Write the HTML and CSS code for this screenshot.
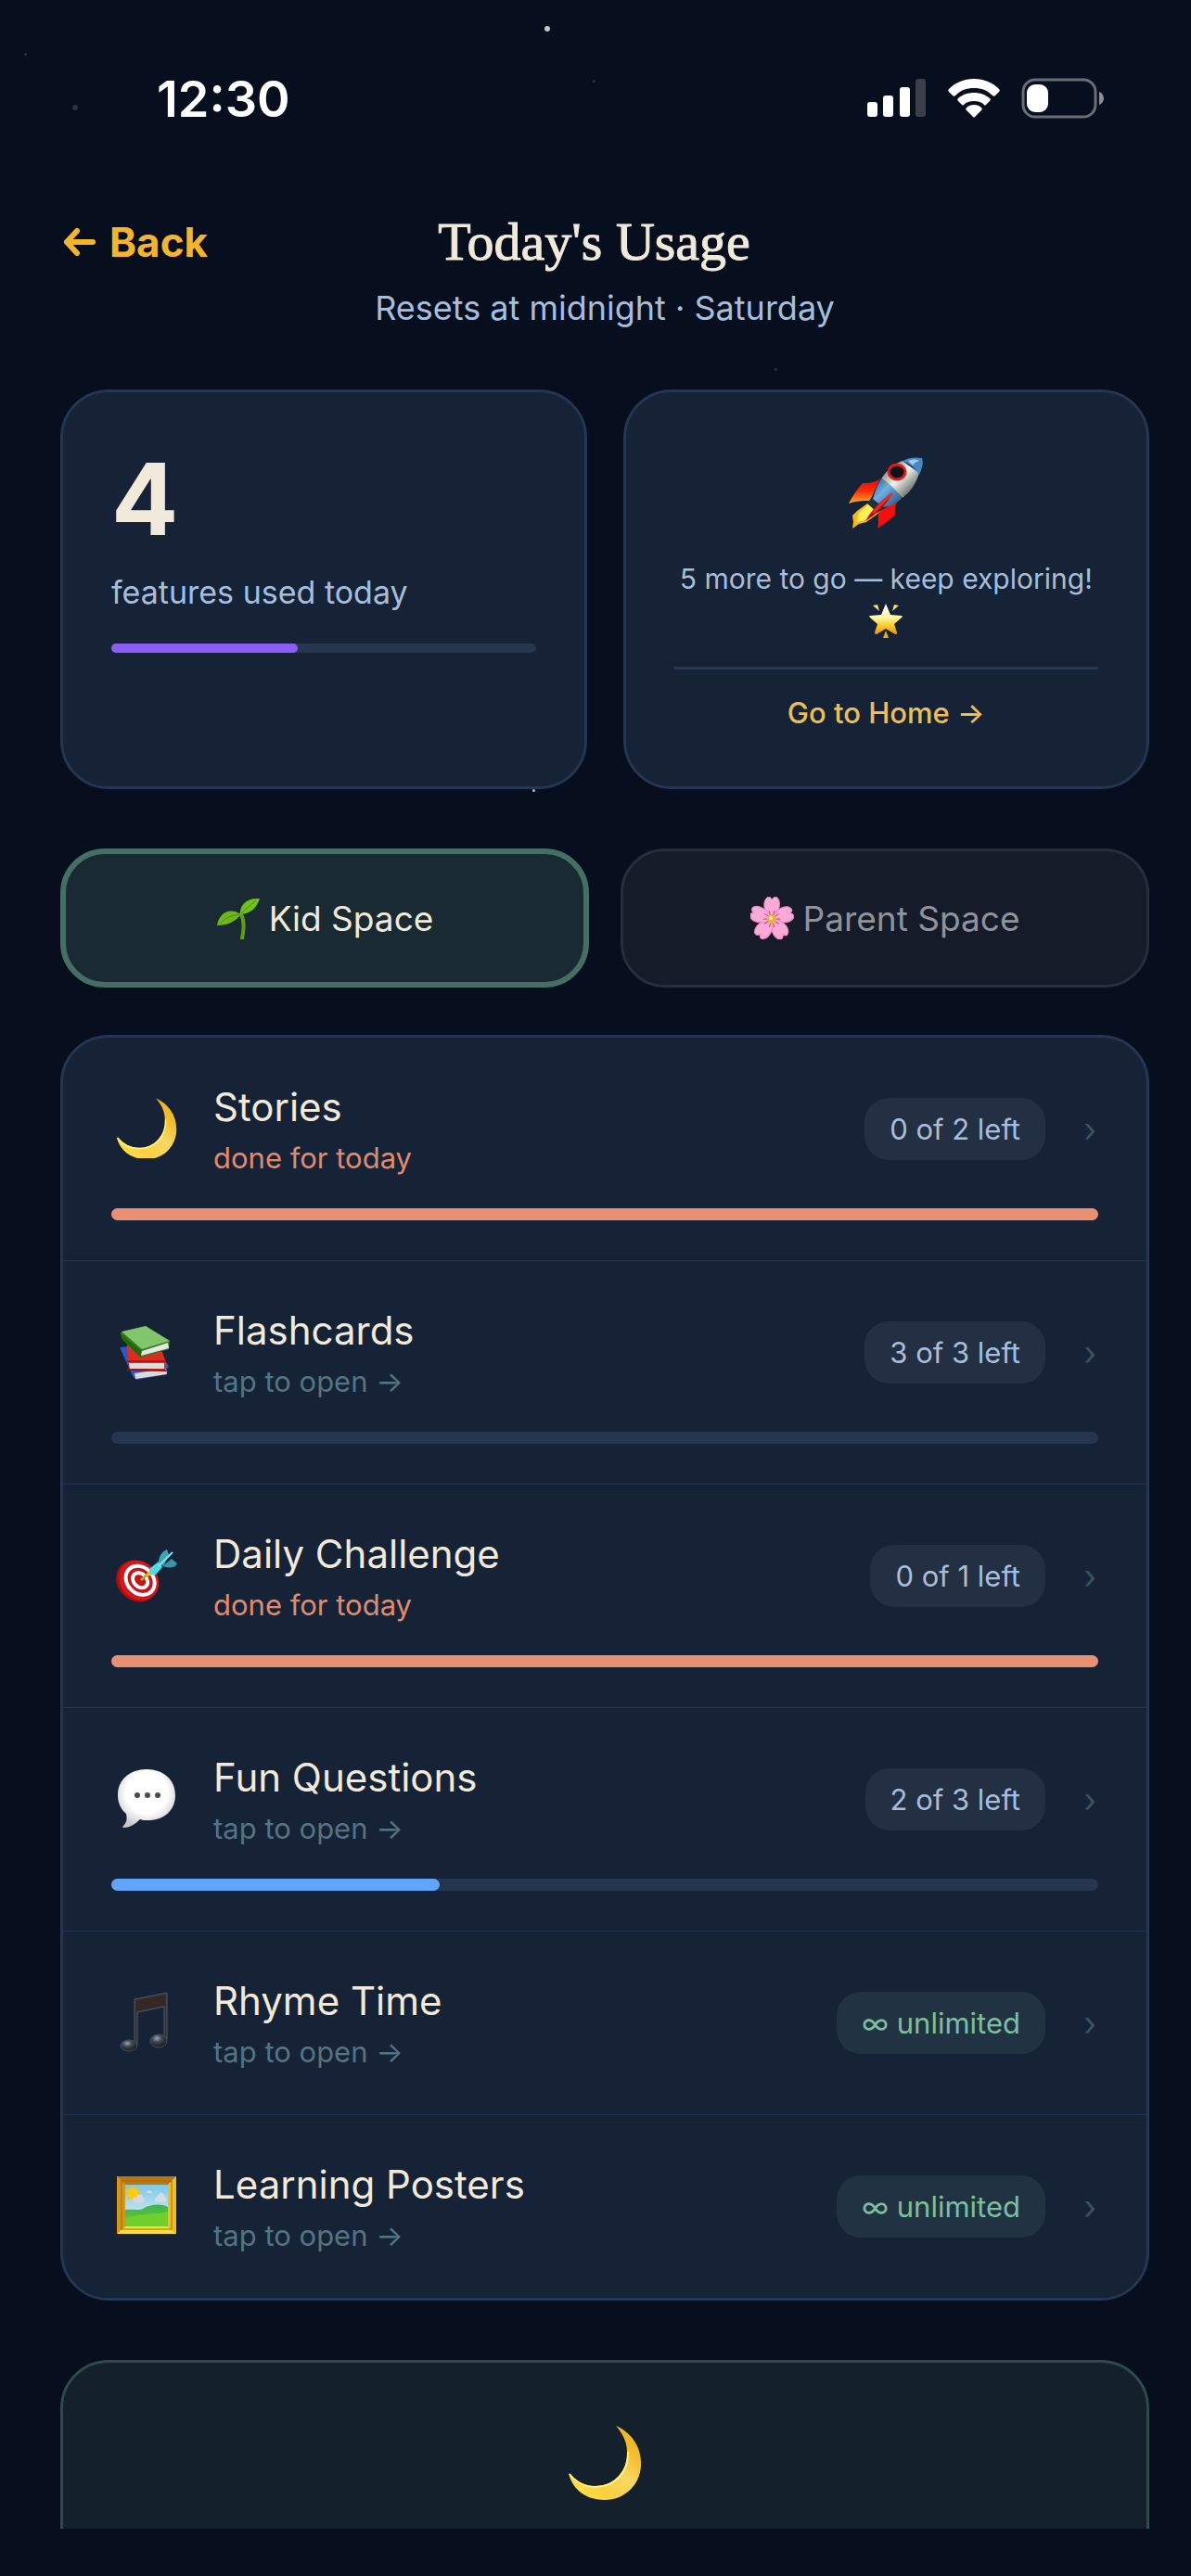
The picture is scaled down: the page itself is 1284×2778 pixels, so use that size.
FILE: index.html
```html
<!DOCTYPE html>
<html lang="en">
<head>
  <meta charset="UTF-8">
  <meta name="viewport" content="width=device-width, initial-scale=1.0">
  <title>Today's Usage</title>
  <link rel="stylesheet" href="styles.css">
</head>
<body>
  <!-- Shared icon art -->
  <svg class="defs" aria-hidden="true">
    <defs>
      <linearGradient id="moonFill" x1="0" y1="1" x2="1" y2="0">
        <stop offset="0" stop-color="#ffe94f"/>
        <stop offset="0.3" stop-color="#fbd03c"/>
        <stop offset="0.55" stop-color="#f7d866"/>
        <stop offset="0.75" stop-color="#f3bf2e"/>
        <stop offset="1" stop-color="#e9a91c"/>
      </linearGradient>
      <symbol id="moon" viewBox="0 0 80 80">
        <path d="M52 0C70 8 80 24 79 43C78 64 61 80 40 80C20 80 5 69 1 51C10 61 20 65 30 65C51 65 65 48 64 28C64 17 59 8 52 0Z" fill="url(#moonFill)"/>
        <path d="M2 52C10 62 20 66 30 66C52 66 66 48 65 28" fill="none" stroke="#fff27a" stroke-width="2"/>
      </symbol>
    </defs>
  </svg>

  <div class="screen">
    <!-- Background stars -->
    <div class="sky" aria-hidden="true">
      <i class="star star-a"></i>
      <i class="star star-b"></i>
      <i class="star star-c"></i>
      <i class="star star-d"></i>
      <i class="star star-e"></i>
      <i class="star star-f"></i>
    </div>

    <div class="status-bar">
      <span class="time">12:30</span>
      <div class="status-icons">
        <svg width="64" height="42" viewBox="0 0 64 42" fill="#fff" aria-label="Signal">
          <rect x="0" y="25" width="11" height="16" rx="3"/>
          <rect x="17" y="18" width="11" height="23" rx="3"/>
          <rect x="35" y="9" width="11" height="32" rx="3"/>
          <rect x="52" y="0" width="11" height="41" rx="3" fill="#3a3f4b"/>
        </svg>
        <svg width="56" height="42" viewBox="0 0 56 42" fill="#fff" aria-label="Wi-Fi">
          <path d="M28 0C39 0 48 4 55 11C56 12 56 13 55 14L51 18C50 19 49 19 48 18C42 12 36 10 28 10C20 10 14 12 8 18C7 19 6 19 5 18L1 14C0 13 0 12 1 11C8 4 17 0 28 0Z"/>
          <path d="M28 15C35 15 40 17 45 21C46 22 46 23 45 24L41 28C40 29 40 29 39 28C36 25 33 24 28 24C23 24 20 25 17 28C16 29 16 29 15 28L11 24C10 23 10 22 11 21C16 17 21 15 28 15Z"/>
          <path d="M28 28C31 28 34 29 36 31C37 32 37 33 36 34L29 41C28 42 28 42 27 41L20 34C19 33 19 32 20 31C22 29 25 28 28 28Z"/>
        </svg>
        <svg width="89" height="44" viewBox="0 0 89 44" aria-label="Battery">
          <rect x="2" y="2" width="78" height="40" rx="13" fill="none" stroke="#696d77" stroke-width="3"/>
          <rect x="6" y="7" width="23" height="30" rx="9" fill="#fff"/>
          <path d="M84 15C87 16 89 19 89 22C89 25 87 28 84 29Z" fill="#8b8e96"/>
        </svg>
      </div>
    </div>

    <header>
      <div class="title-row">
        <a class="back" href="#">
          <svg width="36" height="32" viewBox="0 0 36 32" fill="none" stroke="#f4b52a" stroke-width="6" stroke-linecap="round" stroke-linejoin="round" aria-hidden="true">
            <path d="M15 4L4 16L15 28M4 16H32"/>
          </svg>
          Back
        </a>
        <h1>Today's Usage</h1>
        <span class="title-spacer"></span>
      </div>
      <p class="subtitle">Resets at midnight · Saturday</p>
    </header>

    <main>
      <section class="summary">
        <div class="card">
          <div class="count">4</div>
          <p class="count-label">features used today</p>
          <div class="track"><div class="fill fill-purple" style="width: 44%"></div></div>
        </div>
        <div class="card card-center">
          <svg class="rocket" viewBox="0 0 80 80" aria-hidden="true">
            <defs>
              <linearGradient id="hull" x1="0.2" y1="0.2" x2="0.8" y2="0.8">
                <stop offset="0" stop-color="#8f9799"/>
                <stop offset="0.45" stop-color="#f2f4ee"/>
                <stop offset="1" stop-color="#6f7672"/>
              </linearGradient>
              <linearGradient id="blueHull" x1="0" y1="0" x2="1" y2="1">
                <stop offset="0" stop-color="#24558a"/>
                <stop offset="0.4" stop-color="#6db0e6"/>
                <stop offset="1" stop-color="#1d4069"/>
              </linearGradient>
              <linearGradient id="fin" x1="0" y1="0" x2="0" y2="1">
                <stop offset="0" stop-color="#d80e05"/>
                <stop offset="0.5" stop-color="#fb2c06"/>
                <stop offset="1" stop-color="#ffb428"/>
              </linearGradient>
            </defs>
            <path d="M34 23C27 28 21 28 15 28C9 34 5 41 0 50C8 47 15 47 23 47Z" fill="url(#fin)"/>
            <path d="M53 47C49 53 50 58 50 62C44 68 38 72 31 77C33 70 31 65 32 59Z" fill="#f3120b"/>
            <path d="M20 50L35 57C30 63 24 66 19 70L11 72L4 77L5 70L4 63L9 58Z" fill="#f7b91e"/>
            <path d="M21 51L33 58L17 68L9 70L11 60Z" fill="#ffef55"/>
            <path d="M25 43L37 56L31 60L20 50Z" fill="#20303e"/>
            <path d="M36 22C31 29 29 36 26 45L37 54C46 53 54 49 59 42Z" fill="url(#blueHull)"/>
            <path d="M36 22C42 13 49 7 58 4L76 17C73 27 68 36 59 43Z" fill="url(#hull)"/>
            <path d="M36 22L59 43" stroke="#d8c66a" stroke-width="1"/>
            <path d="M58 4C65 0 72 0 79 1C81 7 79 12 76 19C72 12 66 7 58 4Z" fill="#4687c6"/>
            <path d="M64 4C69 2 73 2 76 4C72 5 70 7 69 9Z" fill="#9dcbf2"/>
            <ellipse cx="52" cy="16" rx="9" ry="8" fill="#101216" stroke="#e51a1d" stroke-width="3"/>
            <path d="M47 39C39 44 28 51 18 69C31 60 40 53 47 39Z" fill="#a90e0e"/>
            <path d="M47 39C39 46 31 55 26 60" fill="none" stroke="#ef2a26" stroke-width="3"/>
          </svg>
          <p class="nudge">5 more to go — keep exploring!
            <svg class="glow-star" viewBox="0 0 36 38" aria-hidden="true">
              <defs>
                <linearGradient id="starFill" x1="0" y1="0" x2="0" y2="1">
                  <stop offset="0" stop-color="#fff"/>
                  <stop offset="0.45" stop-color="#fff6a8"/>
                  <stop offset="0.7" stop-color="#fbd02c"/>
                  <stop offset="1" stop-color="#e8920f"/>
                </linearGradient>
              </defs>
              <path d="M18 0L23 12L35 13C36 13 36 14 35 15L27 22L30 31C30 33 29 33 28 33L18 27L8 33C7 33 6 33 6 31L9 22L1 15C0 14 0 13 1 13L13 12Z" fill="url(#starFill)"/>
              <path d="M4 2L9 1L11 8Z" fill="#f7e27a"/>
              <path d="M32 2L27 1L25 8Z" fill="#f7e27a"/>
              <path d="M18 29L21 37H15Z" fill="#eeae1c"/>
            </svg>
          </p>
          <a class="home-link" href="#">Go to Home →</a>
        </div>
      </section>

      <div class="tabs">
        <button class="tab tab-active" type="button">
          <svg width="47" height="46" viewBox="0 0 47 46" aria-hidden="true">
            <path d="M27 19C31 27 30 36 28 45" fill="none" stroke="#5f9d13" stroke-width="4" stroke-linecap="round"/>
            <path d="M26 19C25 9 33 1 47 2C44 11 39 18 26 19Z" fill="#74c01c"/>
            <path d="M27 19C15 11 3 17 1 31C11 31 20 28 27 19Z" fill="#6cb71a"/>
            <path d="M27 18C33 13 38 8 43 4M25 19C17 20 10 23 4 29" fill="none" stroke="#4b8f0d" stroke-width="1"/>
          </svg>
          Kid Space
        </button>
        <button class="tab" type="button">
          <svg width="47" height="46" viewBox="0 0 47 46" aria-hidden="true">
            <g fill="#fba9d6" stroke="#e987be" stroke-width="1">
              <path id="petal" d="M23 25C15 18 12 6 18 1C21 -1 22 1 23 3C25 1 26 -1 29 1C34 6 31 18 23 25Z"/>
              <use href="#petal" transform="rotate(72 23 24)"/>
              <use href="#petal" transform="rotate(144 23 24)"/>
              <use href="#petal" transform="rotate(216 23 24)"/>
              <use href="#petal" transform="rotate(288 23 24)"/>
            </g>
            <g stroke="#c24a86" stroke-width="1">
              <path id="stamen" d="M20 15L22 22M26 15L24 22"/>
              <use href="#stamen" transform="rotate(72 23 24)"/>
              <use href="#stamen" transform="rotate(144 23 24)"/>
              <use href="#stamen" transform="rotate(216 23 24)"/>
              <use href="#stamen" transform="rotate(288 23 24)"/>
            </g>
            <circle cx="23" cy="24" r="5" fill="#e9b23e"/>
            <circle cx="22" cy="23" r="2" fill="#fff08e"/>
          </svg>
          Parent Space
        </button>
      </div>

      <ul class="feature-list">
        <li>
          <a class="feature" href="#">
            <svg class="feature-icon" viewBox="0 0 80 77" aria-hidden="true"><use href="#moon" width="80" height="80"/></svg>
            <span class="feature-text">
              <span class="feature-name">Stories</span>
              <span class="feature-note note-done">done for today</span>
            </span>
            <span class="pill">0 of 2 left</span>
            <span class="chevron">›</span>
          </a>
          <div class="track track-tall"><div class="fill fill-orange" style="width: 100%"></div></div>
        </li>
        <li>
          <a class="feature" href="#">
            <svg class="feature-icon" viewBox="0 0 66 66" aria-hidden="true">
              <path d="M4 29L14 28L55 46L57 50L54 53L55 58L22 64L18 60Z" fill="#3457bd"/>
              <path d="M20 57L54 52L55 58L21 63Z" fill="#dadada"/>
              <path d="M12 26L50 34L54 45L53 54L14 53Z" fill="#e02b20"/>
              <path d="M14 46H52V52H15Z" fill="#dcdcdc"/>
              <path d="M12 53L54 54" stroke="#8e1210" stroke-width="2"/>
              <path d="M12 44H54" stroke="#b0170f" stroke-width="2"/>
              <path d="M5 13L32 6L58 22L57 31L27 40L6 19Z" fill="#2f7f18"/>
              <path d="M6 12L32 6L58 22L28 31Z" fill="#82c56a"/>
              <path d="M28 33L56 24L57 30L27 38Z" fill="#e6e6e6"/>
              <path d="M5 14L27 33L27 40L7 21Z" fill="#22670f"/>
            </svg>
            <span class="feature-text">
              <span class="feature-name">Flashcards</span>
              <span class="feature-note">tap to open →</span>
            </span>
            <span class="pill">3 of 3 left</span>
            <span class="chevron">›</span>
          </a>
          <div class="track track-tall"><div class="fill fill-blue" style="width: 0%"></div></div>
        </li>
        <li>
          <a class="feature" href="#">
            <svg class="feature-icon" viewBox="0 0 66 66" aria-hidden="true">
              <g transform="rotate(45 24 40)">
                <ellipse cx="23" cy="41" rx="24" ry="21" fill="#a40f14"/>
                <ellipse cx="24" cy="39" rx="23" ry="20" fill="#d3171d"/>
                <ellipse cx="25" cy="38" rx="19" ry="16" fill="#fff"/>
                <ellipse cx="25" cy="38" rx="15" ry="12" fill="#c4151b"/>
                <ellipse cx="25" cy="38" rx="11" ry="9" fill="#fff"/>
                <ellipse cx="25" cy="38" rx="7" ry="5" fill="#c4151b"/>
              </g>
              <path d="M27 39L36 31" stroke="#c9a11c" stroke-width="3"/>
              <path d="M34 34L37 26L46 19L50 25L43 33Z" fill="#4ddbe8"/>
              <path d="M46 20C46 13 50 8 55 6L57 12L51 24Z" fill="#3aa7b5"/>
              <path d="M50 24L60 16L66 21C63 27 57 26 50 24Z" fill="#3597a6"/>
              <path d="M46 24L61 9" stroke="#7fe9f0" stroke-width="2"/>
              <path d="M32 35L36 29L38 34Z" fill="#e9c31d"/>
            </svg>
            <span class="feature-text">
              <span class="feature-name">Daily Challenge</span>
              <span class="feature-note note-done">done for today</span>
            </span>
            <span class="pill">0 of 1 left</span>
            <span class="chevron">›</span>
          </a>
          <div class="track track-tall"><div class="fill fill-orange" style="width: 100%"></div></div>
        </li>
        <li>
          <a class="feature" href="#">
            <svg class="feature-icon" viewBox="0 0 66 66" aria-hidden="true">
              <defs>
                <radialGradient id="bubble" cx="0.5" cy="0.4" r="0.6">
                  <stop offset="0.6" stop-color="#fff"/>
                  <stop offset="1" stop-color="#c9c9cb"/>
                </radialGradient>
              </defs>
              <path d="M33 2C51 2 64 13 64 30C64 47 51 57 35 57C31 57 28 57 26 56C20 62 14 65 8 65C7 65 7 64 8 63C12 59 12 55 11 50C5 45 2 38 2 30C2 13 15 2 33 2Z" fill="url(#bubble)"/>
              <circle cx="23" cy="30" r="3" fill="#4a4a4a"/>
              <circle cx="34" cy="30" r="3" fill="#4a4a4a"/>
              <circle cx="45" cy="30" r="3" fill="#4a4a4a"/>
            </svg>
            <span class="feature-text">
              <span class="feature-name">Fun Questions</span>
              <span class="feature-note">tap to open →</span>
            </span>
            <span class="pill">2 of 3 left</span>
            <span class="chevron">›</span>
          </a>
          <div class="track track-tall"><div class="fill fill-blue" style="width: 33.3%"></div></div>
        </li>
        <li>
          <a class="feature" href="#">
            <svg class="feature-icon" viewBox="0 0 66 66" aria-hidden="true">
              <defs>
                <radialGradient id="noteHead" cx="0.4" cy="0.3" r="0.7">
                  <stop offset="0" stop-color="#9aa6b0"/>
                  <stop offset="0.4" stop-color="#3f4a54"/>
                  <stop offset="1" stop-color="#17191d"/>
                </radialGradient>
              </defs>
              <path d="M20 9L55 2V52H52V17L23 23V58H20Z" fill="#33302f" stroke="#4f5a64" stroke-width="1"/>
              <path d="M22 11L53 5V15L22 21Z" fill="#352724"/>
              <ellipse cx="14" cy="59" rx="9" ry="6" fill="url(#noteHead)" stroke="#47525c" stroke-width="1"/>
              <ellipse cx="46" cy="54" rx="9" ry="7" fill="url(#noteHead)" stroke="#47525c" stroke-width="1"/>
            </svg>
            <span class="feature-text">
              <span class="feature-name">Rhyme Time</span>
              <span class="feature-note">tap to open →</span>
            </span>
            <span class="pill pill-green">∞ unlimited</span>
            <span class="chevron">›</span>
          </a>
        </li>
        <li>
          <a class="feature" href="#">
            <svg class="feature-icon" viewBox="0 0 66 66" aria-hidden="true">
              <defs>
                <linearGradient id="sky" x1="0" y1="0" x2="0" y2="1">
                  <stop offset="0" stop-color="#7cc9e6"/>
                  <stop offset="1" stop-color="#e3f3f4"/>
                </linearGradient>
                <linearGradient id="grass" x1="0" y1="0" x2="0" y2="1">
                  <stop offset="0" stop-color="#3fb552"/>
                  <stop offset="1" stop-color="#6ccb22"/>
                </linearGradient>
              </defs>
              <rect x="1" y="2" width="64" height="62" fill="#e0a41b"/>
              <path d="M1 2H65L56 11H10Z" fill="#b9780f"/>
              <path d="M1 64H65L56 56H10Z" fill="#fbe03a"/>
              <path d="M1 2V64L10 56V11Z" fill="#d3951a"/>
              <path d="M65 2V64L56 56V11Z" fill="#f0bc27"/>
              <rect x="6" y="7" width="54" height="52" fill="none" stroke="#a8690c" stroke-width="1"/>
              <rect x="10" y="11" width="46" height="45" fill="url(#sky)"/>
              <path d="M18 12V28M10 20H26M13 14L24 26M24 14L13 26" stroke="#f1bd12" stroke-width="2"/>
              <circle cx="18" cy="20" r="6" fill="#fccb12"/>
              <path d="M18 29C17 26 20 24 22 25C23 20 29 20 29 25C32 26 32 29 30 30C26 31 20 31 18 29Z" fill="#d4d7e2"/>
              <path d="M42 28C41 25 44 24 45 24C45 19 52 18 52 24C55 25 56 28 53 29C50 30 44 30 42 28Z" fill="#d7dbe6"/>
              <path d="M33 20C34 16 38 17 39 20Z" fill="#d7dbe6"/>
              <path d="M10 38C18 37 24 39 29 37C36 32 49 31 56 35V56H10Z" fill="url(#grass)"/>
              <path d="M10 48C25 41 40 44 56 40V56H10Z" fill="#70cf2a"/>
            </svg>
            <span class="feature-text">
              <span class="feature-name">Learning Posters</span>
              <span class="feature-note">tap to open →</span>
            </span>
            <span class="pill pill-green">∞ unlimited</span>
            <span class="chevron">›</span>
          </a>
        </li>
      </ul>

      <section class="night-card">
        <svg class="night-moon" aria-hidden="true"><use href="#moon"/></svg>
      </section>
    </main>
  </div>
</body>
</html>
```
FILE: styles.css
```css
/* General Reset */
body, h1, p, ul, button {
  margin: 0;
  padding: 0;
}

* {
  box-sizing: border-box;
}

body {
  font-family: Inter, "Liberation Sans", sans-serif;
  background-color: #070e1d;
  color: #f1e9d9;
  display: flex;
  flex-direction: column;
  height: 100vh;
  padding-bottom: 51px;
}

a {
  color: inherit;
  text-decoration: none;
}

svg {
  display: block;
  flex-shrink: 0;
}

.defs {
  position: absolute;
  width: 0;
  height: 0;
}

.screen {
  position: relative;
  flex: 1;
  min-height: 0;
  overflow: hidden;
  padding: 0 45px 0 65px;
}

/* Stars */
.star {
  position: absolute;
  width: 3px;
  height: 3px;
  border-radius: 50%;
  background-color: #2b3240;
}

.star-a {
  left: 587px;
  top: 28px;
  width: 6px;
  height: 6px;
  background-color: #c4c6cb;
}

.star-b {
  left: 26px;
  top: 57px;
}

.star-c {
  left: 639px;
  top: 86px;
}

.star-d {
  left: 78px;
  top: 113px;
  width: 6px;
  height: 6px;
}

.star-e {
  left: 835px;
  top: 397px;
}

.star-f {
  left: 574px;
  top: 851px;
  background-color: #b9bcc2;
}

/* Status bar */
.status-bar {
  display: flex;
  align-items: center;
  justify-content: space-between;
  height: 212px;
  padding: 0 49px 0 104px;
}

.time {
  font-size: 54px;
  font-weight: 600;
  color: #ffffff;
}

.status-icons {
  display: flex;
  align-items: center;
  gap: 23px;
}

/* Header */
header {
  padding-top: 13px;
  text-align: center;
}

.title-row {
  display: flex;
  align-items: center;
  justify-content: space-between;
  padding-left: 3px;
}

.back {
  display: flex;
  align-items: center;
  gap: 14px;
  font-size: 44px;
  font-weight: 700;
  color: #f4b52a;
}

.title-spacer {
  width: 182px;
}

h1 {
  font-family: "Liberation Serif", serif;
  font-size: 58px;
  font-weight: 400;
  line-height: 72px;
  -webkit-text-stroke: 1px #f1e9d9;
}

.subtitle {
  margin-top: 10px;
  font-size: 36px;
  line-height: 50px;
  color: #a6bedb;
}

/* Summary cards */
.summary {
  display: grid;
  grid-template-columns: 1fr 1fr;
  gap: 39px;
  margin-top: 63px;
}

.card {
  padding: 52px;
  background-color: #162235;
  border: 3px solid #243651;
  border-radius: 52px;
}

.card-center {
  display: flex;
  flex-direction: column;
  align-items: center;
  text-align: center;
}

.count {
  font-size: 107px;
  font-weight: 700;
  line-height: 126px;
}

.count-label {
  margin-top: 14px;
  font-size: 34px;
  line-height: 48px;
  color: #a6bedb;
}

.card .track {
  margin-top: 31px;
}

.track {
  height: 10px;
  border-radius: 8px;
  background-color: #26364f;
}

.fill {
  height: 100%;
  border-radius: 8px;
}

.fill-purple {
  background-color: #8b5cf6;
}

.fill-orange {
  background-color: #e99072;
}

.fill-blue {
  background-color: #60a5fa;
}

.rocket {
  width: 82px;
  height: 80px;
  margin-top: 18px;
}

.nudge {
  margin-top: 29px;
  font-size: 30px;
  line-height: 45px;
  color: #a6bedb;
}

.glow-star {
  width: 36px;
  height: 38px;
  margin: 4px auto 3px;
}

.home-link {
  align-self: stretch;
  margin-top: 27px;
  padding-top: 20px;
  border-top: 3px solid #243651;
  font-size: 31px;
  font-weight: 500;
  line-height: 54px;
  color: #e9bf58;
}

/* Tabs */
.tabs {
  display: grid;
  grid-template-columns: 1fr 1fr;
  gap: 34px;
  margin-top: 64px;
}

.tab {
  display: flex;
  align-items: center;
  justify-content: center;
  gap: 10px;
  height: 150px;
  font-family: inherit;
  font-size: 37px;
  color: #8f939c;
  background-color: #151b29;
  border: 3px solid #272e3b;
  border-radius: 48px;
  cursor: pointer;
}

.tab-active {
  color: #f1e9d9;
  background-color: #1a2a32;
  border: 6px solid #456e66;
}

/* Feature list */
.feature-list {
  margin-top: 51px;
  list-style: none;
  background-color: #162235;
  border: 3px solid #243651;
  border-radius: 52px;
}

.feature-list li {
  padding: 43px 52px;
}

.feature-list li + li {
  border-top: 1px solid #243651;
}

.feature {
  display: flex;
  align-items: center;
}

.feature-icon {
  width: 66px;
  height: 66px;
  margin: 0 39px 3px 5px;
}

.feature-text {
  display: flex;
  flex-direction: column;
  flex: 1;
}

.feature-name {
  font-size: 42px;
  line-height: 63px;
}

.feature-note {
  font-size: 31px;
  line-height: 48px;
  color: #547482;
}

.note-done {
  color: #e08a6e;
}

.pill {
  padding: 0 27px;
  font-size: 31px;
  line-height: 67px;
  color: #a6bedb;
  background-color: #232f42;
  border-radius: 26px;
}

.pill-green {
  color: #7bbf9f;
  background-color: #213342;
}

.chevron {
  width: 57px;
  padding-right: 2px;
  text-align: right;
  font-size: 36px;
  color: #3d5060;
}

.track-tall {
  height: 13px;
  margin-top: 30px;
}

/* Bottom card, cut off by the end of the screen */
.night-card {
  display: flex;
  justify-content: center;
  min-height: 300px;
  margin-top: 64px;
  padding-top: 68px;
  background-color: #14202b;
  border: 3px solid #2f4a4d;
  border-radius: 52px;
}

.night-moon {
  width: 80px;
  height: 80px;
}
```
